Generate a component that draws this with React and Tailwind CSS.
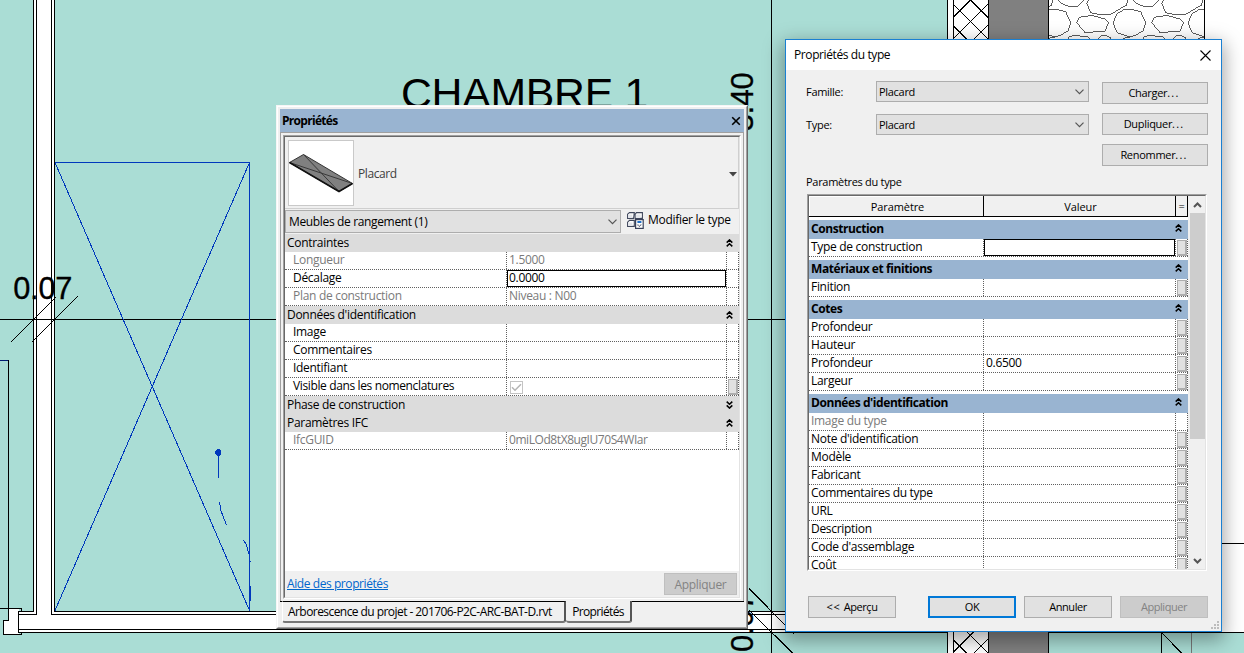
import React from "react";

const TEAL = "#aaddd5";

function Hatch({ x, y, w, h, ox, oy, id }) {
  const s = 21.33;
  const lines = [];
  for (let i = -4; i < 6; i++) {
    const cx = ox + i * s;
    lines.push(<path key={"a" + i} d={`M${cx - 80} ${oy - 80}L${cx + 80} ${oy + 80}`} />);
    lines.push(<path key={"b" + i} d={`M${cx + 80} ${oy - 80}L${cx - 80} ${oy + 80}`} />);
  }
  return (
    <g stroke="#000" strokeWidth="1" shapeRendering="crispEdges">
      <clipPath id={id}>
        <rect x={x} y={y} width={w} height={h} />
      </clipPath>
      <rect x={x} y={y} width={w} height={h} fill="#fff" stroke="none" />
      <g clipPath={`url(#${id})`}>{lines}</g>
    </g>
  );
}

function Stones() {
  const unit = (
    <>
      <path d="M925 0L920 10L932 38L960 44H990L1040 15L1043 0" />
      <path d="M835 0L842 10L870 20L895 18L912 0" />
      <path d="M1000 68L1010 42L1030 30L1050 27L1082 35L1097 68L1090 92L1068 105L1048 111L1010 97Z" />
      <path d="M890 68L898 52L935 46L975 57L986 68L975 93L915 98Z" />
      <path d="M865 120V112L880 107L920 109L935 120" />
      <path d="M953 120L962 108L976 106L990 112L996 120" />
      <path d="M1030 115L1050 111" />
    </>
  );
  return (
    <g>
      <clipPath id="stones">
        <rect x="1049" y="0" width="155" height="40" />
      </clipPath>
      <g clipPath="url(#stones)">
        <g transform="translate(780 0) scale(0.33333)" fill="none" stroke="#5c5c5c" strokeWidth="3" shapeRendering="crispEdges">
          <g transform="translate(-225 0)">{unit}</g>
          {unit}
          <g transform="translate(225 0)">{unit}</g>
        </g>
      </g>
    </g>
  );
}

function Drawing() {
  return (
    <svg className="absolute inset-0" width="1244" height="653" viewBox="0 0 1244 653">
      <rect width="1244" height="653" fill={TEAL} />
      <g shapeRendering="crispEdges">
        {/* walls */}
        <rect x="34" y="0" width="20" height="615" fill="#fff" />
        <rect x="18" y="612" width="770" height="20" fill="#fff" />
        <rect x="9" y="609" width="10" height="25" fill="#fff" />
        <rect x="4" y="621" width="6" height="13" fill="#fff" />
        <rect x="948" y="0" width="296" height="632" fill="#fff" />
        <rect x="948" y="632" width="6" height="21" fill="#fff" />
        <rect x="989" y="0" width="59" height="653" fill="#808080" />
        <g fill="#000">
          <rect x="33" y="0" width="1" height="612" />
          <rect x="36" y="0" width="1" height="615" />
          <rect x="51" y="0" width="1" height="615" />
          <rect x="54" y="0" width="1" height="612" />
          <rect x="18" y="611" width="16" height="1" />
          <rect x="18" y="614" width="19" height="1" />
          <rect x="54" y="611" width="734" height="1" />
          <rect x="51" y="614" width="737" height="1" />
          <rect x="18" y="629" width="770" height="1" />
          <rect x="18" y="632" width="930" height="1" />
          <rect x="18" y="611" width="1" height="22" />
          <rect x="8" y="360" width="1" height="261" />
          <rect x="0" y="608" width="22" height="1" />
          <rect x="21" y="608" width="1" height="4" />
          <rect x="3" y="620" width="6" height="1" />
          <rect x="3" y="620" width="1" height="15" />
          <rect x="3" y="634" width="19" height="1" />
          <rect x="21" y="632" width="1" height="3" />
          <rect x="0" y="319" width="788" height="1" />
          <rect x="771" y="0" width="1" height="653" />
          <rect x="947" y="0" width="1" height="653" />
          <rect x="953" y="0" width="1" height="653" />
          <rect x="988" y="0" width="1" height="653" />
          <rect x="1048" y="0" width="1" height="653" />
          <rect x="1204" y="0" width="1" height="100" />
          <rect x="1048" y="632" width="196" height="1" />
          <rect x="1161" y="632" width="1" height="21" />
          <rect x="1222" y="543" width="22" height="1" />
        </g>
        <rect x="1191" y="633" width="1" height="20" fill="#777" />
        <rect x="0" y="360" width="8" height="1" fill="#001a70" />
        <g stroke="#000" fill="none">
          <path d="M11 342L56 297M32 342L77.5 296.5" />
          <path d="M749 588.5L794 634M749 610L793 653.5M1161.5 632.5L1181.5 653" />
        </g>
        {/* cupboard footprint */}
        <g stroke="#0038bd" fill="none">
          <path d="M55 162.5H249.5V611M55 162.5L249.5 610.5M249.5 162.5L55 610.5" />
          <path d="M218.5 455V478M219.5 502L221 511L226.5 525M243.5 540.5L246 544L249 554M250.5 561V562M250.5 586V601" />
        </g>
        <path d="M217 449H219L221 451V454L219 456H217L215 454V451Z" fill="#0038bd" />
      </g>
      <Hatch id="hatch-top" x={954} y={0} w={34} h={40} ox={959.7} oy={10.7} />
      <Hatch id="hatch-bottom" x={954} y={630} w={34} h={23} ox={959.7} oy={646} />
      <Stones />
      <g fontFamily="'Liberation Sans', Arial, sans-serif" fill="#000">
        <text x="401" y="108" fontSize="42.8">CHAMBRE 1</text>
        <g stroke="#000" strokeWidth="0.3">
          <text x="13.3" y="299" fontSize="30.8">0.07</text>
          <text transform="translate(752.7 131.3) rotate(-90)" fontSize="30.8">3.40</text>
          <text transform="translate(752.7 652) rotate(-90)" fontSize="30.8">0.07</text>
        </g>
      </g>
    </svg>
  );
}

function DoubleChevron({ down }) {
  return (
    <svg width="7" height="8" viewBox="0 0 7 8" className={down ? "rotate-180" : ""}>
      <path d="M0.7 3.6L3.5 0.9L6.3 3.6M0.7 7.4L3.5 4.7L6.3 7.4" fill="none" stroke="#000" strokeWidth="1.5" />
    </svg>
  );
}

function Chevron() {
  return (
    <svg width="9" height="6" viewBox="0 0 9 6">
      <path d="M0.5 0.7L4.5 4.7L8.5 0.7" fill="none" stroke="#555" strokeWidth="1.2" />
    </svg>
  );
}

function MiniButton() {
  return <div className="ml-px mt-px h-4 w-[10px] border border-r-2 border-b-2 border-[#adadad] bg-[#e1e1e1]" />;
}

/* ---------- Properties palette ---------- */

function Group({ title, down }) {
  return (
    <div className="flex h-[18px] shrink-0 items-center justify-between bg-[#dcdcdc] pr-[6px] pl-[2px]">
      <span>{title}</span>
      <DoubleChevron down={down} />
    </div>
  );
}

function Prop({ name, value, muted, editing, checkbox, button }) {
  return (
    <div className={"flex h-[18px] shrink-0 border-b border-dotted border-[#606060] leading-[16px] " + (muted ? "text-[#7a7a7a]" : "text-black")}>
      <div className="w-[221px] pl-2">{name}</div>
      <div className="w-[220px] border-l border-dotted border-[#606060]">
        {editing ? (
          <div className="h-[17px] border border-black pl-px leading-[14px]">{value}</div>
        ) : checkbox ? (
          <div className="mt-[3px] ml-[3px] flex h-[13px] w-[13px] items-center justify-center border border-[#c4c4c4]">
            <svg width="11" height="9" viewBox="0 0 11 9">
              <path d="M1 4.3L4 7.3L10 1.2" fill="none" stroke="#b5b5b5" strokeWidth="1.5" />
            </svg>
          </div>
        ) : (
          <div className="pl-[2px]">{value}</div>
        )}
      </div>
      <div className="w-[13px] border-x border-dotted border-[#606060]">{button && <MiniButton />}</div>
    </div>
  );
}

function Thumbnail() {
  return (
    <div className="h-[66px] w-[66px] border border-[#c9c9c9] bg-white">
      <svg width="64" height="64" viewBox="0 0 64 64">
        <path d="M0.5 21.5L14.5 13.5L63.5 42.5L50 50.5Z" fill="#808080" stroke="#333" />
        <path d="M0.5 21.5L63.5 42.5M14.5 13.5L50 50.5" stroke="#3a3a3a" fill="none" />
        <path d="M0.5 21.5L50 50.5L63.5 42.5" stroke="#111" strokeWidth="1.6" fill="none" />
      </svg>
    </div>
  );
}

function EditTypeIcon() {
  return (
    <svg width="17" height="17" viewBox="0 0 17 17" fill="none">
      <path d="M2.5 0.6H7.3L6.6 6.4H0.6V2.2ZM9.4 0.6H15.4V6.4H8.2V2.2ZM2.5 8.4H7.3V14.4H0.6V10.2Z" fill="#fff" stroke="#3f475c" strokeWidth="1.1" />
      <path d="M1.2 2.6H5.4V5.9H1.2ZM8.8 2.6H13.6V5.9H8.8ZM1.2 10.6H5.4V13.9H1.2Z" fill="#e3e5ea" />
      <rect x="8.6" y="7.6" width="7.6" height="8.8" fill="#fff" stroke="#39415a" strokeWidth="1.2" />
      <rect x="10.4" y="9" width="4" height="2" fill="#1e6fc8" />
      <path d="M10.5 12.8h1M13.4 12.8h1M12 14.2h1M10.5 12.8L12 14.4M14 12.8L12.6 14.4" stroke="#39415a" strokeWidth="0.7" />
    </svg>
  );
}

function PropertiesPalette() {
  return (
    <section className="absolute top-[105px] left-[276px] flex h-[524px] w-[472px] flex-col border border-t-[#f6f6f6] border-r-[#696969] border-b-[#696969] border-l-[#f6f6f6] bg-[#f0f0f0]">
      <div className="flex grow flex-col border border-t-white border-r-[#a0a0a0] border-b-[#a0a0a0] border-l-white px-[2px] pt-[2px]">
        <header className="flex h-[23px] shrink-0 items-center justify-between bg-[#99b4d1] pr-[3px] pl-[2px]">
          <h1 className="pt-px font-bold tracking-[-0.7px]">Propriétés</h1>
          <svg width="10" height="10" viewBox="0 0 10 10">
            <path d="M1.2 1.2L8.8 8.8M8.8 1.2L1.2 8.8" stroke="#000" strokeWidth="1.6" />
          </svg>
        </header>
        <div className="h-[469px] w-[464px] shrink-0 border border-b-0 border-[#a0a0a0] pt-[2px] pl-[2px]">
          <div className="w-[458px] border border-t-[#a0a0a0] border-r-white border-b-white border-l-[#a0a0a0]">
            <div className="flex h-[462px] flex-col border border-t-[#696969] border-r-[#e3e3e3] border-b-[#e3e3e3] border-l-[#696969]">
              <div className="flex h-[72px] shrink-0 items-center border-r border-b border-[#cfcfcf] pr-px pl-[3px]">
                <Thumbnail />
                <span className="grow pt-[2px] pl-[4px] tracking-[-0.4px] text-[#404040]">Placard</span>
                <svg width="8" height="5" viewBox="0 0 8 5" className="mt-[3px]">
                  <path d="M0 0H8L4 4.5Z" fill="#444" />
                </svg>
              </div>
              <div className="mt-px flex h-6 shrink-0 items-start">
                <div className="flex h-[23px] w-[336px] items-center justify-between border border-[#adadad] bg-[#e1e1e1] pr-[3px] pl-[3px]">
                  <span className="tracking-[-0.35px]">Meubles de rangement (1)</span>
                  <Chevron />
                </div>
                <div className="flex items-start gap-1 pt-[2px] pl-[6px]">
                  <EditTypeIcon />
                  <span>Modifier le type</span>
                </div>
              </div>
              <div className="flex h-[337px] shrink-0 flex-col bg-white">
                <Group title="Contraintes" />
                <Prop name="Longueur" value="1.5000" muted />
                <Prop name="Décalage" value="0.0000" editing />
                <Prop name="Plan de construction" value="Niveau : N00" muted />
                <Group title="Données d'identification" />
                <Prop name="Image" />
                <Prop name="Commentaires" />
                <Prop name="Identifiant" />
                <Prop name={<span className="tracking-[-0.37px]">Visible dans les nomenclatures</span>} checkbox button />
                <Group title="Phase de construction" down />
                <Group title="Paramètres IFC" />
                <Prop name="IfcGUID" value={<span className="tracking-[-0.43px]">0miLOd8tX8ugIU70S4WIar</span>} muted />
              </div>
              <div className="flex h-[26px] shrink-0 items-center justify-between pr-[2px] pl-[2px]">
                <a className="tracking-[-0.42px] text-[#0066cc] underline">Aide des propriétés</a>
                <button className="h-[22px] w-[73px] border border-[#bfbfbf] bg-[#cccccc] pt-px text-[#838383]">Appliquer</button>
              </div>
            </div>
          </div>
        </div>
        <nav className="flex h-[22px] shrink-0 items-start">
          <div className="h-full w-[2px] border-t border-black" />
          <div className="flex h-[22px] w-[284px] items-center rounded-b-[3px] border-t border-r-2 border-b-2 border-l border-t-black border-r-[#555] border-b-[#777] border-l-white pt-px pl-[5px] tracking-[-0.56px]">
            Arborescence du projet - 201706-P2C-ARC-BAT-D.rvt
          </div>
          <div className="flex h-[22px] w-[66px] items-center justify-center rounded-b-[3px] border-r-2 border-b-2 border-r-[#555] border-b-[#777] pt-[2px] tracking-[-0.65px]">
            Propriétés
          </div>
          <div className="h-full grow border-t border-black" />
        </nav>
      </div>
    </section>
  );
}

/* ---------- Type properties dialog ---------- */

function TypeGroup({ title }) {
  return (
    <div className="mt-[3px] flex h-[19px] shrink-0 items-start justify-between bg-[#99b4d1] pr-[6px] pl-[2px]">
      <span className="pt-px font-bold tracking-[-0.43px]">{title}</span>
      <div className="pt-1">
        <DoubleChevron />
      </div>
    </div>
  );
}

function TypeRow({ name, value, muted, editing }) {
  return (
    <div className={"flex h-[18px] shrink-0 border-b border-dotted border-[#606060] leading-[16px] " + (muted ? "text-[#7a7a7a]" : "text-black")}>
      <div className="w-[174px] pl-[2px]">{name}</div>
      <div className="w-[192px] border-l border-dotted border-[#606060]">
        {editing ? <div className="h-[17px] border border-black" /> : <div className="pl-[2px]">{value}</div>}
      </div>
      <div className="w-[13px] border-x border-dotted border-[#606060]">{!muted && <MiniButton />}</div>
    </div>
  );
}

function Select({ value }) {
  return (
    <div className="flex h-[21px] w-[213px] items-center justify-between border border-[#adadad] bg-[#e1e1e1] pr-1 pl-[2px]">
      <span className="pt-px">{value}</span>
      <Chevron />
    </div>
  );
}

function SideButton({ label }) {
  return (
    <button className="h-[22px] w-[106px] border border-[#adadad] bg-[#e1e1e1] pr-[2px]">
      {label}
      <span className="tracking-[1.2px]">...</span>
    </button>
  );
}

function TypeDialog() {
  return (
    <section className="absolute top-[39px] left-[785px] flex h-[593px] w-[437px] flex-col border border-[#1a80d2] bg-[#f0f0f0] shadow-[0_6px_18px_2px_rgba(0,0,0,0.36)]">
      <header className="flex h-[30px] shrink-0 items-center justify-between bg-white pr-[10px] pl-2">
        <h2 className="tracking-[-0.4px]">Propriétés du type</h2>
        <svg width="11" height="11" viewBox="0 0 11 11">
          <path d="M0.5 0.5L10.5 10.5M10.5 0.5L0.5 10.5" stroke="#000" strokeWidth="1.1" />
        </svg>
      </header>
      <div className="flex h-[96px] shrink-0 pt-[11px] pl-5 text-[11px]">
        <div className="flex flex-col gap-3">
          <div className="flex items-center">
            <span className="w-[70px]">Famille:</span>
            <Select value="Placard" />
          </div>
          <div className="flex items-center">
            <span className="w-[70px]">Type:</span>
            <Select value="Placard" />
          </div>
        </div>
        <div className="flex flex-col gap-[9px] pt-px pl-[13px]">
          <SideButton label="Charger" />
          <SideButton label="Dupliquer" />
          <SideButton label="Renommer" />
        </div>
      </div>
      <div className="flex h-[28px] shrink-0 items-center pt-[3px] pl-5 text-[11px]">Paramètres du type</div>
      <div className="ml-[21px] h-[377px] w-[400px] shrink-0 border border-t-[#a0a0a0] border-r-white border-b-white border-l-[#a0a0a0]">
        <div className="flex h-[375px] border border-t-[#696969] border-r-[#e3e3e3] border-b-[#e3e3e3] border-l-[#696969] bg-white">
          <div className="flex h-[373px] w-[379px] flex-col overflow-hidden">
            <div className="flex h-[21px] shrink-0 border-b border-black bg-[#f0f0f0] text-center text-[11px] leading-[20px] tracking-[-0.1px]">
              <div className="w-[174px] border-t border-l border-white pl-[2px] leading-[19px]">Paramètre</div>
              <div className="w-[192px] border-l border-black pl-[2px] leading-[21px]">Valeur</div>
              <div className="w-[13px] border-x border-black leading-[20px]">=</div>
            </div>
            <TypeGroup title="Construction" />
            <TypeRow name="Type de construction" editing />
            <TypeGroup title="Matériaux et finitions" />
            <TypeRow name="Finition" />
            <TypeGroup title="Cotes" />
            <TypeRow name="Profondeur" />
            <TypeRow name="Hauteur" />
            <TypeRow name="Profondeur" value="0.6500" />
            <TypeRow name="Largeur" />
            <TypeGroup title="Données d'identification" />
            <TypeRow name="Image du type" muted />
            <TypeRow name="Note d'identification" />
            <TypeRow name="Modèle" />
            <TypeRow name="Fabricant" />
            <TypeRow name="Commentaires du type" />
            <TypeRow name="URL" />
            <TypeRow name="Description" />
            <TypeRow name="Code d'assemblage" />
            <TypeRow name="Coût" />
          </div>
          <div className="flex w-[17px] flex-col items-center bg-[#f0f0f0] pl-[2px]">
            <div className="flex h-[17px] items-center">
              <svg width="9" height="6" viewBox="0 0 9 6">
                <path d="M1 5L4.5 1.5L8 5" fill="none" stroke="#555" strokeWidth="2" />
              </svg>
            </div>
            <div className="h-[226px] w-[15px] bg-[#cdcdcd]" />
            <div className="flex grow items-end pb-[5px]">
              <svg width="9" height="6" viewBox="0 0 9 6">
                <path d="M1 1L4.5 4.5L8 1" fill="none" stroke="#555" strokeWidth="2" />
              </svg>
            </div>
          </div>
        </div>
      </div>
      <footer className="flex grow items-start pt-[25px] pl-[22px] text-[11px] tracking-[-0.45px]">
        <button className="h-[22px] w-[88px] border border-[#adadad] bg-[#e1e1e1]">
          <span className="tracking-[0.6px]">&lt;&lt; </span>Aperçu
        </button>
        <button className="ml-8 h-[22px] w-[88px] border-2 border-[#0078d7] bg-[#e1e1e1]">OK</button>
        <button className="ml-2 h-[22px] w-[88px] border border-[#adadad] bg-[#e1e1e1]">Annuler</button>
        <button className="ml-2 h-[22px] w-[88px] border border-[#bfbfbf] bg-[#cccccc] text-[#838383]">Appliquer</button>
      </footer>
      <svg className="absolute right-[2px] bottom-[2px]" width="8" height="8" viewBox="0 0 8 8" shapeRendering="crispEdges">
        <path d="M6 0h2v2h-2zM3 3h2v2h-2zM6 3h2v2h-2zM0 6h2v2h-2zM3 6h2v2h-2zM6 6h2v2h-2z" fill="#bcbcbc" />
      </svg>
    </section>
  );
}

export default function App() {
  return (
    <main className="relative h-[653px] w-[1244px] overflow-hidden whitespace-nowrap font-['Open_Sans','Noto_Sans',sans-serif] text-[12px] leading-4 tracking-[-0.3px] text-black">
      <Drawing />
      <PropertiesPalette />
      <TypeDialog />
    </main>
  );
}
